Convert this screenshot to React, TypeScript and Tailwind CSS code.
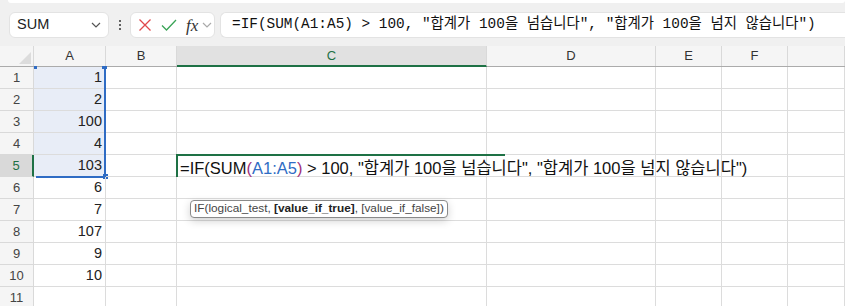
import React from "react";

const cols = ["A", "B", "C", "D", "E", "F", ""];
const colW = ["w-[72px]", "w-[71px]", "w-[310px]", "w-[169px]", "w-[66px]", "w-[66px]", "flex-1"];
const values: Record<number, string> = { 1: "1", 2: "2", 3: "100", 4: "4", 5: "103", 6: "6", 7: "7", 8: "107", 9: "9", 10: "10" };

const Chevron = ({ className = "" }: { className?: string }) => (
  <svg width="10" height="6" viewBox="0 0 10 6" className={className}>
    <path d="M1 1l4 4 4-4" fill="none" stroke="currentColor" strokeWidth="1.2" />
  </svg>
);

const FormulaBar = () => (
  <div className="h-[46px] bg-[#f0f0f0] relative flex items-center pt-[4px] pl-[9px]">
    {/* ribbon bottom edge */}
    <div className="absolute top-0 left-[8px] right-0 h-[3px] bg-white rounded-b-md" />
    <div className="w-[100px] h-[26px] bg-white rounded-md border border-[#e3e3e3] flex items-center justify-between px-[7px] text-[14.5px] text-[#222]">
      <span>SUM</span>
      <Chevron className="text-[#555]" />
    </div>
    <div className="w-[21px] flex flex-col items-center gap-[2px]">
      <span className="w-[2px] h-[2px] bg-[#333] rounded-full" />
      <span className="w-[2px] h-[2px] bg-[#333] rounded-full" />
      <span className="w-[2px] h-[2px] bg-[#333] rounded-full" />
    </div>
    <div className="w-[85px] h-[26px] bg-white rounded-md border border-[#e3e3e3] flex items-center pl-[6px]">
      <svg width="14" height="14" viewBox="0 0 14 14" className="ml-[1px]">
        <path d="M1.5 1.5l11 11M12.5 1.5l-11 11" stroke="#e0484b" strokeWidth="1.3" />
      </svg>
      <svg width="16" height="14" viewBox="0 0 16 14" className="ml-[9px]">
        <path d="M1 7.5l4.5 4.5L15 2" fill="none" stroke="#3aa457" strokeWidth="1.3" />
      </svg>
      <span className="ml-[9px] text-[17px] italic text-[#333] leading-none" style={{ fontFamily: '"Liberation Serif", serif' }}>
        fx
      </span>
      <Chevron className="text-[#aaa] ml-[4px]" />
    </div>
    <div className="ml-[5px] flex-1 h-[26px] bg-white rounded-l-md border border-r-0 border-[#e3e3e3] flex items-center pl-[11px] text-[14.4px] text-[#111] whitespace-nowrap" style={{ fontFamily: '"Liberation Mono", "Noto Sans CJK KR", monospace' }}>
      =IF(SUM(A1:A5) &gt; 100, "합계가 100을 넘습니다", "합계가 100을 넘지 않습니다")
    </div>
  </div>
);

const Grid = () => (
  <div className="bg-white text-[#222]" style={{ fontFamily: '"Liberation Sans", "Noto Sans CJK KR", sans-serif' }}>
    {/* column headers */}
    <div className="flex h-[21px] bg-[#f5f5f5] border-b border-[#ababab] text-[13px] text-[#333]">
      <div className="w-[34px] border-r border-[#d9d9d9] relative">
        <svg width="12" height="12" viewBox="0 0 12 12" className="absolute right-[2px] bottom-[2px]">
          <path d="M12 0V12H0z" fill="#dcdcdc" />
        </svg>
      </div>
      {cols.map((c, i) => (
        <div
          key={i}
          className={`${colW[i]} flex items-center justify-center border-r border-[#d9d9d9] ${c === "C" ? "bg-[#e1e1e1] text-[#1e7145] border-b-2 border-b-[#1e7145] -mb-px" : ""}`}
        >
          {c}
        </div>
      ))}
    </div>
    {Array.from({ length: 11 }, (_, r) => r + 1).map((row) => (
      <div key={row} className="flex h-[22px] relative">
        <div
          className={`w-[34px] flex items-center justify-center text-[13px] border-r border-b border-[#d9d9d9] ${row === 5 ? "bg-[#d9d9d9] text-[#1e7145] border-r-2 border-r-[#1e7145]" : "bg-[#f5f5f5] text-[#444]"}`}
        >
          {row}
        </div>
        {cols.map((c, i) => (
          <div
            key={i}
            className={`${colW[i]} relative border-r border-b border-[#dcdcdc] flex items-center justify-end pr-[3px] text-[14.5px] ${c === "A" && row <= 5 ? "bg-[#e8edf7]" : ""}`}
          >
            {c === "A" ? values[row] : null}
            {c === "A" && row <= 5 && (
              <div className={`absolute right-[-1px] top-0 bottom-[-1px] w-[2px] bg-[#2f6cc4] ${row === 1 ? "top-[1px]" : ""}`} />
            )}
            {c === "A" && row === 1 && (
              <>
                <div className="absolute left-0 top-[-1px] w-[3px] h-[3px] bg-[#2f6cc4]" />
                <div className="absolute right-[-2px] top-[-1px] w-[5px] h-[3px] bg-[#2f6cc4]" />
              </>
            )}
            {c === "A" && row === 5 && (
              <>
                <div className="absolute left-[2px] right-0 bottom-[-2px] h-[2px] bg-[#2f6cc4]" />
                <div className="absolute right-[-3px] bottom-[-3px] w-[5px] h-[5px] bg-[#2f6cc4]" />
              </>
            )}
          </div>
        ))}
        {row === 5 && (
          <>
            {/* in-cell editor over C5 */}
            <div className="absolute left-[176px] top-[-1px] w-[329px] h-[2px] bg-[#1e7145] z-10" />
            <div className="absolute left-[176px] top-[-1px] w-[2px] h-[23px] bg-[#1e7145] z-10" />
            <div className="absolute left-[180px] top-[2px] h-[22px] flex items-center whitespace-nowrap text-[16.5px] text-[#111] z-10">
              =IF(SUM<span className="text-[#a0307a]">(</span>
              <span className="text-[#2f6cc4]">A1:A5</span>
              <span className="text-[#a0307a]">)</span>&nbsp;&gt; 100, "합계가 100을 넘습니다", "합계가 100을 넘지 않습니다")
            </div>
            <div className="absolute left-[190px] top-[45px] h-[18px] px-[3px] flex items-center whitespace-nowrap bg-white border border-[#8a8a8a] rounded-[4px] shadow-[0_3px_8px_rgba(0,0,0,0.18)] text-[11.8px] text-[#444] z-20">
              IF(logical_test,&nbsp;<b className="text-[#222]">[value_if_true]</b>, [value_if_false])
            </div>
          </>
        )}
      </div>
    ))}
  </div>
);

export default function App() {
  return (
    <div className="w-[845px] h-[306px] overflow-hidden bg-white" style={{ fontFamily: '"Liberation Sans", "Noto Sans CJK KR", sans-serif' }}>
      <FormulaBar />
      <Grid />
    </div>
  );
}
